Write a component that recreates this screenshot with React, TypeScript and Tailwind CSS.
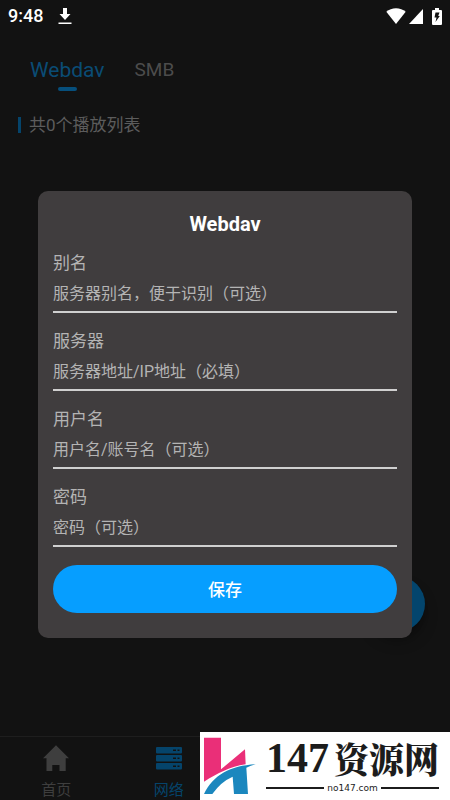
import React from 'react';

const fields = [
  { id: 'alias', label: '别名', placeholder: '服务器别名，便于识别（可选）', type: 'text' },
  { id: 'server', label: '服务器', placeholder: '服务器地址/IP地址（必填）', type: 'text' },
  { id: 'username', label: '用户名', placeholder: '用户名/账号名（可选）', type: 'text' },
  { id: 'password', label: '密码', placeholder: '密码（可选）', type: 'password' },
];

const StatusBar: React.FC = () => (
  <div className="flex h-8 items-center justify-between px-2 text-white">
    <div className="flex items-center gap-[15px]">
      <span className="text-lg leading-8 font-medium">9:48</span>
      <svg width="14" height="18" viewBox="0 0 14 18" fill="currentColor">
        <path d="M5 1h4v6h3.500L7 13 1.500 7H5zM.5 15.500h13V17H.5z" />
      </svg>
    </div>
    <div className="flex items-center">
      <svg width="20" height="16" viewBox="0 0 20 16" fill="currentColor">
        <path d="M10 16 .3 3.800C3 1.500 6.300.3 10 .3s7 1.200 9.700 3.500z" />
      </svg>
      <svg className="ml-[3px]" width="14" height="15" viewBox="0 0 14 15" fill="currentColor">
        <path d="M14 0v15H0z" />
      </svg>
      <svg className="ml-[9px]" width="10" height="17" viewBox="0 0 10 17">
        <path d="M3 0h4v2h2q1 0 1 1v13q0 1-1 1H1q-1 0-1-1V3q0-1 1-1h2z" fill="#fff" />
        <path d="M3.500 4.500h4L6.200 8h1.600L3.500 14l1-4.500h-2z" fill="#121212" />
      </svg>
    </div>
  </div>
);

const NavBar: React.FC = () => (
  <nav className="grid h-16 grid-cols-4 border-t border-[#1e1e1e] text-[15px]">
    <a href="#home" className="flex flex-col items-center pt-2 text-[#3e3e3e]">
      <svg width="26" height="26" viewBox="0 0 26 26" fill="currentColor">
        <path d="M13 .3 26 13.300H22.700V26H16.500V20H9.300V26H3.500V13.300H0z" />
      </svg>
      <span className="mt-[9px] leading-5">首页</span>
    </a>
    <a href="#network" className="flex flex-col items-center pt-2 text-[#05446b]">
      <svg width="26" height="26" viewBox="0 0 26 26">
        <g fill="currentColor">
          <rect x="0" y="2" width="26" height="6.500" rx="1" />
          <rect x="0" y="10" width="26" height="6.500" rx="1" />
          <rect x="0" y="18" width="26" height="6.500" rx="1" />
        </g>
        <path
          d="M17 5.200h3M21.500 5.200h2M17 13.200h3M21.500 13.200h2M17 21.200h3M21.500 21.200h2"
          stroke="#121212"
          strokeWidth="1.500"
        />
      </svg>
      <span className="mt-[9px] leading-5">网络</span>
    </a>
  </nav>
);

const SiteBadge: React.FC = () => (
  <div className="absolute right-0 bottom-0 flex h-[68px] w-[250px] bg-white text-[#1c1c1c]">
    <svg className="ml-1 shrink-0" width="54" height="68" viewBox="27 21 162 204">
      <path d="M27 38H78V133L150 73L152 118C105 125 68 145 27 170z" fill="#ea2f78" />
      <path d="M27 207C55 150 105 122 182 118Q167 122 154 128L159 207H117L113 155Q78 170 52 207z" fill="#1b87be" />
    </svg>
    <div className="ml-2 flex flex-1 flex-col pt-1 pr-[11px]">
      <div className="flex h-11 items-center justify-between whitespace-nowrap">
        <span className="font-['Liberation_Serif',serif] text-[42px] leading-[42px] font-bold">147</span>
        <span className="font-['Noto_Serif_CJK_SC','Noto_Sans_CJK_SC',serif] text-[35px] leading-10 font-black">
          资源网
        </span>
      </div>
      <div className="flex items-center gap-[3px]">
        <span className="h-0.5 flex-1 bg-current" />
        <span className="font-['DejaVu_Sans',sans-serif] text-[9px] leading-4">no147.com</span>
        <span className="h-0.5 flex-1 bg-current" />
      </div>
    </div>
  </div>
);

const WebdavDialog: React.FC = () => (
  <div className="absolute inset-0 flex items-center px-[38px] pt-[29px]">
    <form
      role="dialog"
      aria-labelledby="dialog-title"
      onSubmit={(e) => e.preventDefault()}
      className="w-full rounded-[10px] bg-[#403d3e] px-[15px] pt-[19px] pb-[25px]"
    >
      <h2 id="dialog-title" className="mb-3 text-center text-xl leading-7 font-bold text-white">
        Webdav
      </h2>
      <div className="flex flex-col gap-[15px]">
        {fields.map((field) => (
          <div key={field.id} className="flex flex-col text-[#b4b4b4]">
            <label htmlFor={field.id} className="text-[17px] leading-[26px]">
              {field.label}
            </label>
            <input
              id={field.id}
              type={field.type}
              placeholder={field.placeholder}
              className="h-[37px] w-full border-b-2 border-[#d0d0d0] bg-transparent text-base outline-none placeholder:text-[#b4b4b4]"
            />
          </div>
        ))}
      </div>
      <button
        type="submit"
        className="mt-[18px] h-12 w-full rounded-full bg-[#069eff] pt-[3px] text-[17px] font-medium text-white"
      >
        保存
      </button>
    </form>
  </div>
);

const App: React.FC = () => {
  return (
    <div className="relative flex min-h-screen flex-col bg-[#121212] font-['Roboto','Noto_Sans_CJK_SC',sans-serif]">
      <StatusBar />

      <main className="flex-1">
        <div className="flex items-start gap-[30px] px-[30px] pt-[22px]">
          <button className="flex flex-col items-center text-[21px] leading-8 text-[#0a4c75]">
            Webdav
            <span className="mt-px h-1 w-[19px] rounded-full bg-[#064f7c]" />
          </button>
          <button className="text-[19px] leading-8 text-[#4c4c4c]">SMB</button>
        </div>
        <div className="mt-[22px] flex items-center gap-2 px-[18px]">
          <span className="h-4 w-[3px] bg-[#05446b]" />
          <p className="text-[17px] leading-6 text-[#5c5c5c]">共0个播放列表</p>
        </div>
      </main>

      <NavBar />

      {/* Add button */}
      <button
        aria-label="添加"
        className="absolute right-[25px] bottom-[168px] size-14 rounded-full bg-[#03456d] shadow-lg shadow-black/40"
      />

      <WebdavDialog />
      <SiteBadge />
    </div>
  );
};

export default App;
